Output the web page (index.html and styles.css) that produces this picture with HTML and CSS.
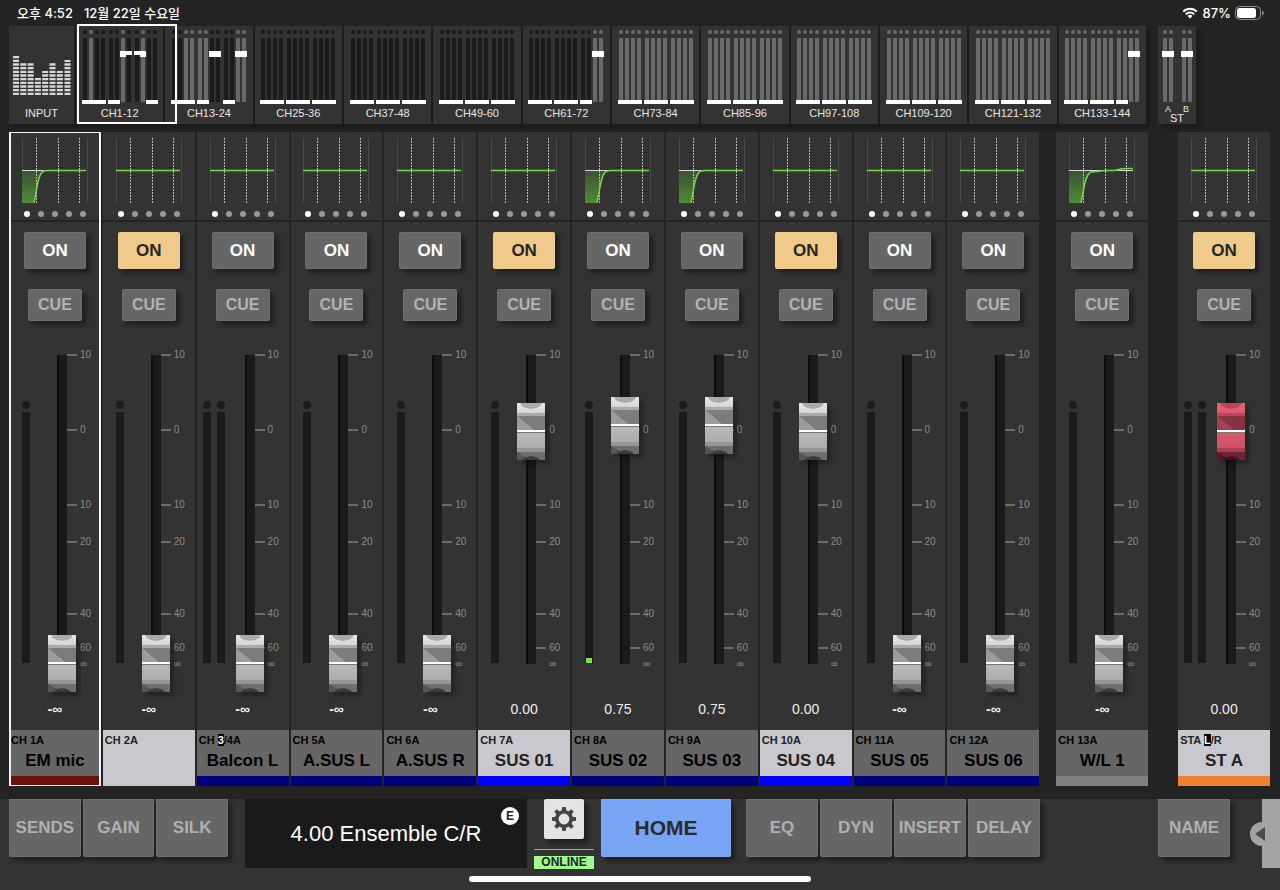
FILE: index.html
```html
<!DOCTYPE html>
<html lang="ko">
<head>
    <meta charset="utf-8">
    <meta name="viewport" content="width=device-width, initial-scale=1">
    <title>StageMix</title>
    <link rel="stylesheet" href="styles.css">
</head>

<body>
    <div id="status-bar">
        <span>오후 4:52</span>
        <span>12월 22일 수요일</span>
        <span class="status-right">
            <svg width="16" height="12" viewBox="0 0 16 12">
                <path d="M1.2 4.6a9.6 9.6 0 0 1 13.6 0M3.8 7.2a6 6 0 0 1 8.4 0" fill="none" stroke="#fff" stroke-width="2"/>
                <path d="M8 11.6L5.5 9a3.6 3.6 0 0 1 5 0z" fill="#fff"/>
            </svg>
            <span>87%</span>
            <svg width="29" height="14" viewBox="0 0 29 14">
                <rect x="0.5" y="0.5" width="25" height="13" rx="4" fill="none" stroke="#8c8c8c"/>
                <rect x="2" y="2" width="19" height="10" rx="2.5" fill="#fff"/>
                <path d="M27 4.5a2.6 2.6 0 0 1 0 5z" fill="#8c8c8c"/>
            </svg>
        </span>
    </div>

    <div id="navigator">
        <button class="tile tile-input">
            <svg width="58" height="42" viewBox="0 0 58 42">
                <path d="M3 41v-39M10.300 41v-32M17.600 41v-32M24.900 41v-17M32.200 41v-24M39.500 41v-32M46.800 41v-24M54.500 41v-35"
                      stroke="#d8d8d8" stroke-width="6" stroke-dasharray="2.3 1.37" fill="none"/>
            </svg>
            <span class="tile-label">INPUT</span>
        </button>
        <div id="banks"></div>
        <button class="tile tile-st">
            <span class="minis" id="st-minis"></span>
            <span class="st-ab"><span>A</span><span>B</span></span>
            <span class="tile-label">ST</span>
        </button>
    </div>

    <main id="mixer"></main>

    <footer>
        <div id="toolbar">
            <div class="tool-group left-tools">
                <button class="tool">SENDS</button>
                <button class="tool">GAIN</button>
                <button class="tool">SILK</button>
            </div>
            <button id="scene">4.00 Ensemble C/R <span class="edit-mark">E</span></button>
            <div id="system">
                <button class="gear" aria-label="Setup">
                    <svg width="26" height="26" viewBox="-13 -13 26 26">
                        <circle r="7.200" fill="none" stroke="#444" stroke-width="3.600"/>
                        <g fill="#444">
                            <path id="tooth" d="M-2.300 -8L-1.700 -12H1.700L2.300 -8z"/>
                            <use href="#tooth" transform="rotate(45)"/>
                            <use href="#tooth" transform="rotate(90)"/>
                            <use href="#tooth" transform="rotate(135)"/>
                            <use href="#tooth" transform="rotate(180)"/>
                            <use href="#tooth" transform="rotate(225)"/>
                            <use href="#tooth" transform="rotate(270)"/>
                            <use href="#tooth" transform="rotate(315)"/>
                        </g>
                    </svg>
                </button>
                <span class="online">ONLINE</span>
            </div>
            <button class="tool home">HOME</button>
            <div class="tool-group right-tools">
                <button class="tool">EQ</button>
                <button class="tool">DYN</button>
                <button class="tool">INSERT</button>
                <button class="tool">DELAY</button>
            </div>
            <button class="tool name-tool">NAME</button>
            <button class="drawer" aria-label="Open drawer">
                <svg width="30" height="24" viewBox="0 0 30 24">
                    <circle cx="12" cy="12" r="12" fill="#a3a3a3"/>
                    <path d="M5 12L15 5V19z" fill="#4c4c4c"/>
                </svg>
            </button>
        </div>
        <div class="home-indicator"></div>
    </footer>

    <script src="script.js"></script>
</body>
</html>
```
FILE: styles.css
```css
* {
    box-sizing: border-box;}

body {
    margin: 0;
    min-height: 100vh;
    display: flex;
    flex-direction: column;
    background-color: #232323;
    color: #fff;
    font-family: "Liberation Sans", Arial, "Noto Sans CJK KR", sans-serif;}

button {
    margin: 0;
    padding: 0;
    border: none;
    font-family: inherit;
    cursor: pointer;}

/* status bar */
#status-bar {
    display: flex;
    gap: 11px;
    height: 26px;
    padding: 0 16px 0 17px;
    line-height: 26px;
    font-family: Inter, "Noto Sans CJK KR", sans-serif;
    font-size: 13px;
    font-weight: 500;}

.status-right {
    display: flex;
    align-items: center;
    gap: 4px;
    margin-left: auto;}

/* bank navigator */
#navigator {
    display: flex;
    height: 98px;
    padding: 0 84px 0 9px;}

.tile {
    display: flex;
    flex-direction: column;
    align-items: center;
    background-color: #333;
    color: #e6e6e6;
    box-shadow: 4px 4px 2px #1b1b1b;}

.tile-label {
    font-size: 11px;
    line-height: 13px;}

.tile-input {
    width: 65px;
    padding-top: 28px;
    gap: 11px;}

#banks {
    position: relative;
    flex: 1;
    display: flex;
    gap: 2px;
    margin: 0 12px 0 2px;}

#banks .tile {
    flex: 1 1 0;
    min-width: 0;
    padding-top: 4px;
    gap: 3px;}

.view-window {
    position: absolute;
    top: -2px;
    left: 1px;
    width: 9.3%;
    height: 100px;
    border: 2px solid #fff;
    pointer-events: none;}

.minis {
    display: flex;
    gap: 2px;}

.mini-group {
    display: flex;}

.mini {
    position: relative;
    width: 6px;
    height: 74px;
    padding: 0 1px;
    color: #1b1b1b;}

.mini.lit {
    color: #696969;}

.mini::before {
    content: "";
    display: block;
    width: 4px;
    height: 4px;
    border-radius: 50%;
    background-color: currentColor;}

.mini::after {
    content: "";
    display: block;
    width: 4px;
    height: 64px;
    margin-top: 4px;
    background-color: currentColor;}

.cap {
    position: absolute;
    left: 0;
    top: 70px;
    width: 6px;
    height: 4px;
    background-color: #fff;}

.cap.up {
    top: 21px;
    height: 6px;}

.cap.thin {
    height: 4px;}

.tile-st {
    width: 38px;
    padding-top: 4px;}

.tile-st .minis {
    gap: 7px;}

.st-ab {
    display: flex;
    gap: 12px;
    margin-top: 1px;
    font-size: 9px;
    line-height: 9px;}

.tile-st .tile-label {
    line-height: 8px;}

/* channel strips */
#mixer {
    display: flex;
    gap: 2px;
    padding: 8px 10px 0 9px;}

.strip {
    position: relative;
    flex: 1 1 0;
    min-width: 0;
    background-color: #333;}

.strip.extra {
    margin-left: 15px;}

.strip.stereo {
    margin-left: 28px;}

.strip.selected::after {
    content: "";
    position: absolute;
    inset: 0;
    border: 2px solid #f4f4f4;
    border-width: 1px 2px;
    pointer-events: none;}

.eq {
    display: flex;
    flex-direction: column;
    align-items: center;
    gap: 8px;
    height: 90px;
    padding-top: 5px;
    border-bottom: 2px solid #222;}

.eq svg {
    display: block;}

.dots {
    display: flex;
    gap: 8px;}

.dots i {
    width: 6px;
    height: 6px;
    border-radius: 50%;
    background-color: #999;}

.dots i:first-child {
    background-color: #fff;}

.keys {
    display: flex;
    flex-direction: column;
    align-items: center;
    gap: 20px;
    padding-top: 10px;}

.on, .cue {
    border-radius: 2px;
    background-color: #666;
    box-shadow: inset 0 0 0 1px rgba(255, 255, 255, 0.06), 4px 4px 4px #1f1f1f;
    font-weight: bold;}

.on {
    width: 62px;
    height: 37px;
    color: #fff;
    font-size: 17px;}

.on.active {
    background-color: #efca8a;
    color: #262626;}

.cue {
    width: 54px;
    height: 32px;
    color: #b2b2b2;
    font-size: 16px;}

.fader-area {
    display: flex;
    justify-content: center;
    height: 374px;
    padding-top: 5px;}

.meters {
    display: flex;
    justify-content: center;
    gap: 6px;
    width: 32px;
    margin-right: 6px;
    padding-top: 75px;}

.meter {
    width: 8px;}

.meter::before {
    content: "";
    display: block;
    width: 8px;
    height: 8px;
    border-radius: 50%;
    background-color: #1b1b1b;}

.meter-bar {
    display: flex;
    align-items: flex-end;
    justify-content: center;
    height: 251px;
    margin-top: 3px;
    background-color: #1b1b1b;}

.level {
    width: 6px;
    background-color: #7be05a;}

/* the cap travels over 309px, the input is one cap longer */
.fader {
    appearance: none;
    position: relative;
    z-index: 1;
    writing-mode: vertical-lr;
    direction: rtl;
    width: 28px;
    height: 366px;
    margin: 0;
    cursor: pointer;
    background: linear-gradient(to right, #0d0d0d 2px, #1a1a1a 2px) center / 10px 309px no-repeat;}

.fader::-webkit-slider-runnable-track {
    width: 28px;
    height: 366px;
    background: none;}

.fader::-webkit-slider-thumb {
    appearance: none;
    width: 28px;
    height: 57px;
    box-shadow: 4px 4px 4px rgba(0, 0, 0, 0.3);
    background:
        radial-gradient(ellipse 11px 6px at 14px 0, #aaa 90%, transparent) 0 0 / 28px 7px no-repeat,
        radial-gradient(ellipse 9px 4px at 14px 100%, #3c3c3c 85%, transparent) 0 100% / 28px 5px no-repeat,
        linear-gradient(to top right, #9c9c9c 49%, transparent 51%) 0 13px / 17px 14px no-repeat,
        linear-gradient(to top right, #565656 49%, transparent 51%) 0 49px / 14px 8px no-repeat,
        linear-gradient(#e6e6e6 0, #d6d6d6 10px, #aaa 10px, #aaa 13px, #7c7c7c 13px, #7c7c7c 27px,
            #fff 27px, #fff 29px, #777 29px, #777 30px, #bababa 30px, #adadad 45px,
            #969696 45px, #969696 49px, #6e6e6e 49px);}

.fader.red::-webkit-slider-thumb {
    background:
        radial-gradient(ellipse 11px 6px at 14px 0, #b94557 90%, transparent) 0 0 / 28px 7px no-repeat,
        radial-gradient(ellipse 9px 4px at 14px 100%, #451320 85%, transparent) 0 100% / 28px 5px no-repeat,
        linear-gradient(to top right, #a04452 49%, transparent 51%) 0 13px / 17px 14px no-repeat,
        linear-gradient(to top right, #521626 49%, transparent 51%) 0 49px / 14px 8px no-repeat,
        linear-gradient(#e85f74 0, #e05a6e 10px, #b94557 10px, #b94557 13px, #85333f 13px, #85333f 27px,
            #fff 27px, #fff 29px, #777 29px, #777 30px, #d9566b 30px, #d25066 45px,
            #a93f50 45px, #a93f50 49px, #6c2333 49px);}

.scale {
    display: grid;
    grid-template-rows: 75px 75px 37px 72px 34px 16px 12px;
    width: 33px;
    height: 321px;
    margin: 23px 0 0 -9px;
    padding: 0;
    list-style: none;
    color: #8c8c8c;
    font-size: 10px;
    line-height: 12px;}

.scale li {
    display: flex;
    gap: 3px;}

.scale li::before {
    content: "";
    width: 10px;
    height: 2px;
    margin-top: 5px;
    background-color: #6c6c6c;}

.scale li:last-child::before {
    background: none;}

.value {
    height: 35px;
    color: #eee;
    text-align: center;
    font-size: 14px;
    line-height: 28px;}

.value.off {
    font-weight: bold;}

.plate {
    height: 56px;
    padding-top: 3px;
    border-bottom: 10px solid #7f7f7f;
    background-color: #666;
    color: #000;}

.plate.bright {
    background-color: #c9c8ce;
    color: #222;}

.plate.maroon { border-bottom-color: #6a100b; }
.plate.none { border-bottom-color: #c9c8ce; }
.plate.navy { border-bottom-color: #00007c; }
.plate.blue { border-bottom-color: #0000fb; }
.plate.gray { border-bottom-color: #7f7f7f; }
.plate.orange { border-bottom-color: #f07f2f; }

.ch-id {
    padding-left: 2px;
    font-size: 11px;
    font-weight: bold;
    line-height: 14px;
    white-space: nowrap;}

.ch-id mark {
    background-color: #000;
    color: #fff;}

.ch-name {
    text-align: center;
    font-size: 17px;
    font-weight: bold;
    line-height: 28px;
    white-space: nowrap;}

/* bottom toolbar */
footer {
    flex: 1;
    margin-top: 13px;
    background-color: #333;}

#toolbar {
    display: flex;
    align-items: flex-start;
    height: 69px;
    padding-left: 9px;}

.tool-group {
    display: flex;
    gap: 2px;}

.tool {
    flex: 1 1 0;
    min-width: 0;
    height: 58px;
    border-radius: 0 0 2px 2px;
    background-color: #666;
    color: #b0b0b0;
    box-shadow: inset 0 0 0 1px rgba(255, 255, 255, 0.06), 4px 4px 4px #1f1f1f;
    font-size: 17px;
    font-weight: bold;}

.left-tools {
    flex: 219 1 0;}

#scene {
    position: relative;
    flex: 282 1 0;
    height: 69px;
    margin: 0 7px 0 17px;
    background-color: #1a1a1a;
    color: #fff;
    font-size: 22px;}

.edit-mark {
    position: absolute;
    top: 8px;
    right: 8px;
    width: 18px;
    height: 18px;
    border-radius: 50%;
    background-color: #fff;
    color: #222;
    font-size: 12px;
    font-weight: bold;
    line-height: 18px;}

#system {
    display: flex;
    flex-direction: column;
    align-items: center;
    width: 60px;}

.gear {
    display: flex;
    align-items: center;
    justify-content: center;
    width: 40px;
    height: 40px;
    border-radius: 2px;
    background-color: #e4e4e4;
    box-shadow: 4px 4px 4px #1f1f1f;}

.online {
    width: 60px;
    margin-top: 10px;
    padding-top: 6px;
    border-top: 1px solid #aaa;
    background: #a0fb8e content-box;
    color: #222;
    text-align: center;
    font-size: 12px;
    font-weight: bold;
    line-height: 13px;}

.tool.home {
    flex-grow: 130;
    margin-left: 7px;
    background-color: #78a4f4;
    color: #2b2b2b;
    font-size: 21px;}

.right-tools {
    flex: 294 1 0;
    margin-left: 15px;}

.name-tool {
    flex-grow: 72;
    margin: 0 32px 0 118px;}

.drawer {
    position: relative;
    width: 18px;
    height: 69px;
    background-color: #a3a3a3;}

.drawer svg {
    position: absolute;
    left: -12px;
    top: 23px;}

.home-indicator {
    width: 342px;
    height: 6px;
    margin: 8px auto 0;
    border-radius: 3px;
    background-color: #fff;}
```
FILE: script.js
```js
// faders are 0-1000 along the travel, 752 is 0 dB
var channels = [
    { id: 'CH 1A', name: 'EM mic', color: 'maroon', eq: 'lowcut', selected: true },
    { id: 'CH 2A', name: '', color: 'none', on: true },
    { id: 'CH <mark>3</mark>/4A', name: 'Balcon L', color: 'navy', meters: 2 },
    { id: 'CH 5A', name: 'A.SUS L', color: 'navy' },
    { id: 'CH 6A', name: 'A.SUS R', color: 'navy' },
    { id: 'CH 7A', name: 'SUS 01', color: 'blue', on: true, fader: 752, value: '0.00' },
    { id: 'CH 8A', name: 'SUS 02', color: 'navy', eq: 'lowcut', fader: 770, value: '0.75', level: 2 },
    { id: 'CH 9A', name: 'SUS 03', color: 'navy', eq: 'lowcut', fader: 770, value: '0.75' },
    { id: 'CH 10A', name: 'SUS 04', color: 'blue', on: true, fader: 752, value: '0.00' },
    { id: 'CH 11A', name: 'SUS 05', color: 'navy' },
    { id: 'CH 12A', name: 'SUS 06', color: 'navy' },
    { id: 'CH 13A', name: 'W/L 1', color: 'gray', eq: 'shelf', extra: 'extra' },
    { id: 'STA <mark>L</mark>/R', name: 'ST A', color: 'orange', on: true, meters: 2, fader: 752, value: '0.00', extra: 'stereo' }
];

var curves = {
    flat: 'M0 33.5H64',
    lowcut: 'M12 66C15 52 16 36 22 34Q23 33.500 26 33.500H64',
    shelf: 'M12 66C15 52 16 38 22 35C25 34 28 35 31 34S38 33.500 44 33.500S50 31.500 56 31.500H64'
};

// . dark, o lit, v dark and raised a bit over 0 dB, V dark at 0 dB, ^ lit at 0 dB
var banks = [
    ['CH1-12', '.o.. ..^v v^..'],
    ['CH13-24', '..oo ooVV ..^^'],
    ['CH25-36', '.... .... ....'],
    ['CH37-48', '.... .... ....'],
    ['CH49-60', '.... .... ....'],
    ['CH61-72', '.... .... ..^^'],
    ['CH73-84', 'oooo oooo oooo'],
    ['CH85-96', 'oooo oooo oooo'],
    ['CH97-108', 'oooo oooo oooo'],
    ['CH109-120', 'oooo oooo oooo'],
    ['CH121-132', 'oooo oooo oooo'],
    ['CH133-144', 'oooo oooo oo^^']
];

function minis(pattern) {
    return pattern.split(' ').map(function(group) {
        return '<span class="mini-group">' + group.split('').map(function(c) {
            var lit = c === 'o' || c === '^' ? ' lit' : '';
            var cap = c === '.' || c === 'o' ? '' : (c === 'v' ? ' up thin' : ' up');
            return '<span class="mini' + lit + '"><span class="cap' + cap + '"></span></span>';
        }).join('') + '</span>';
    }).join('');
}

function eqGraph(type) {
    // cut area left of the curve
    var fill = type === 'flat' ? '' :
        '<path d="M0 33H22C16 38 15 52 12 66H0z" fill="url(#cut)"/>' +
        '<path d="M0 33.500H' + (type === 'shelf' ? 64 : 24) + '" stroke="#ddd"/>';
    return '<svg width="66" height="66" viewBox="0 0 66 66" fill="none">' +
        '<defs><linearGradient id="cut" x1="0" y1="0" x2="0" y2="1">' +
        '<stop offset="0" stop-color="#3d4f36"/><stop offset="1" stop-color="#4f8a35"/></linearGradient></defs>' +
        '<path d="M0.500 1V66M65.500 1V66" stroke="#494949"/>' + fill +
        '<path d="M14.500 1V66M36.500 1V66M57.500 1V66" stroke="#bbb" stroke-dasharray="2 1"/>' +
        '<path d="' + curves[type] + '" stroke="#74da45" stroke-width="1.500"/></svg>';
}

function strip(ch) {
    var label = ch.id.replace(/<\/?mark>/g, '');
    var meter = '<div class="meter"><div class="meter-bar">' +
        (ch.level ? '<div class="level" style="height:' + ch.level + '%"></div>' : '') + '</div></div>';
    return '<section class="strip ' + (ch.extra || '') + (ch.selected ? ' selected' : '') + '">' +
        '<div class="eq">' + eqGraph(ch.eq || 'flat') +
        '<div class="dots"><i></i><i></i><i></i><i></i><i></i></div></div>' +
        '<div class="keys"><button class="on' + (ch.on ? ' active' : '') + '">ON</button>' +
        '<button class="cue">CUE</button></div>' +
        '<div class="fader-area"><div class="meters">' + meter.repeat(ch.meters || 1) + '</div>' +
        '<input type="range" class="fader' + (ch.extra === 'stereo' ? ' red' : '') + '" aria-label="' + label +
        '" min="0" max="1000" value="' + (ch.fader || 0) + '">' +
        '<ul class="scale"><li>10</li><li>0</li><li>10</li><li>20</li><li>40</li><li>60</li><li>∞</li></ul></div>' +
        '<div class="value' + (ch.value ? '' : ' off') + '">' + (ch.value || '-∞') + '</div>' +
        '<div class="plate ' + ch.color + (ch.on ? ' bright' : '') + '"><div class="ch-id">' + ch.id + '</div>' +
        '<div class="ch-name">' + ch.name + '</div></div></section>';
}

document.getElementById('banks').innerHTML = banks.map(function(bank) {
    return '<button class="tile"><span class="minis">' + minis(bank[1]) + '</span>' +
        '<span class="tile-label">' + bank[0] + '</span></button>';
}).join('') + '<div class="view-window"></div>';

document.getElementById('st-minis').innerHTML = minis('^^ ^^');
document.getElementById('mixer').innerHTML = channels.map(strip).join('');
```
